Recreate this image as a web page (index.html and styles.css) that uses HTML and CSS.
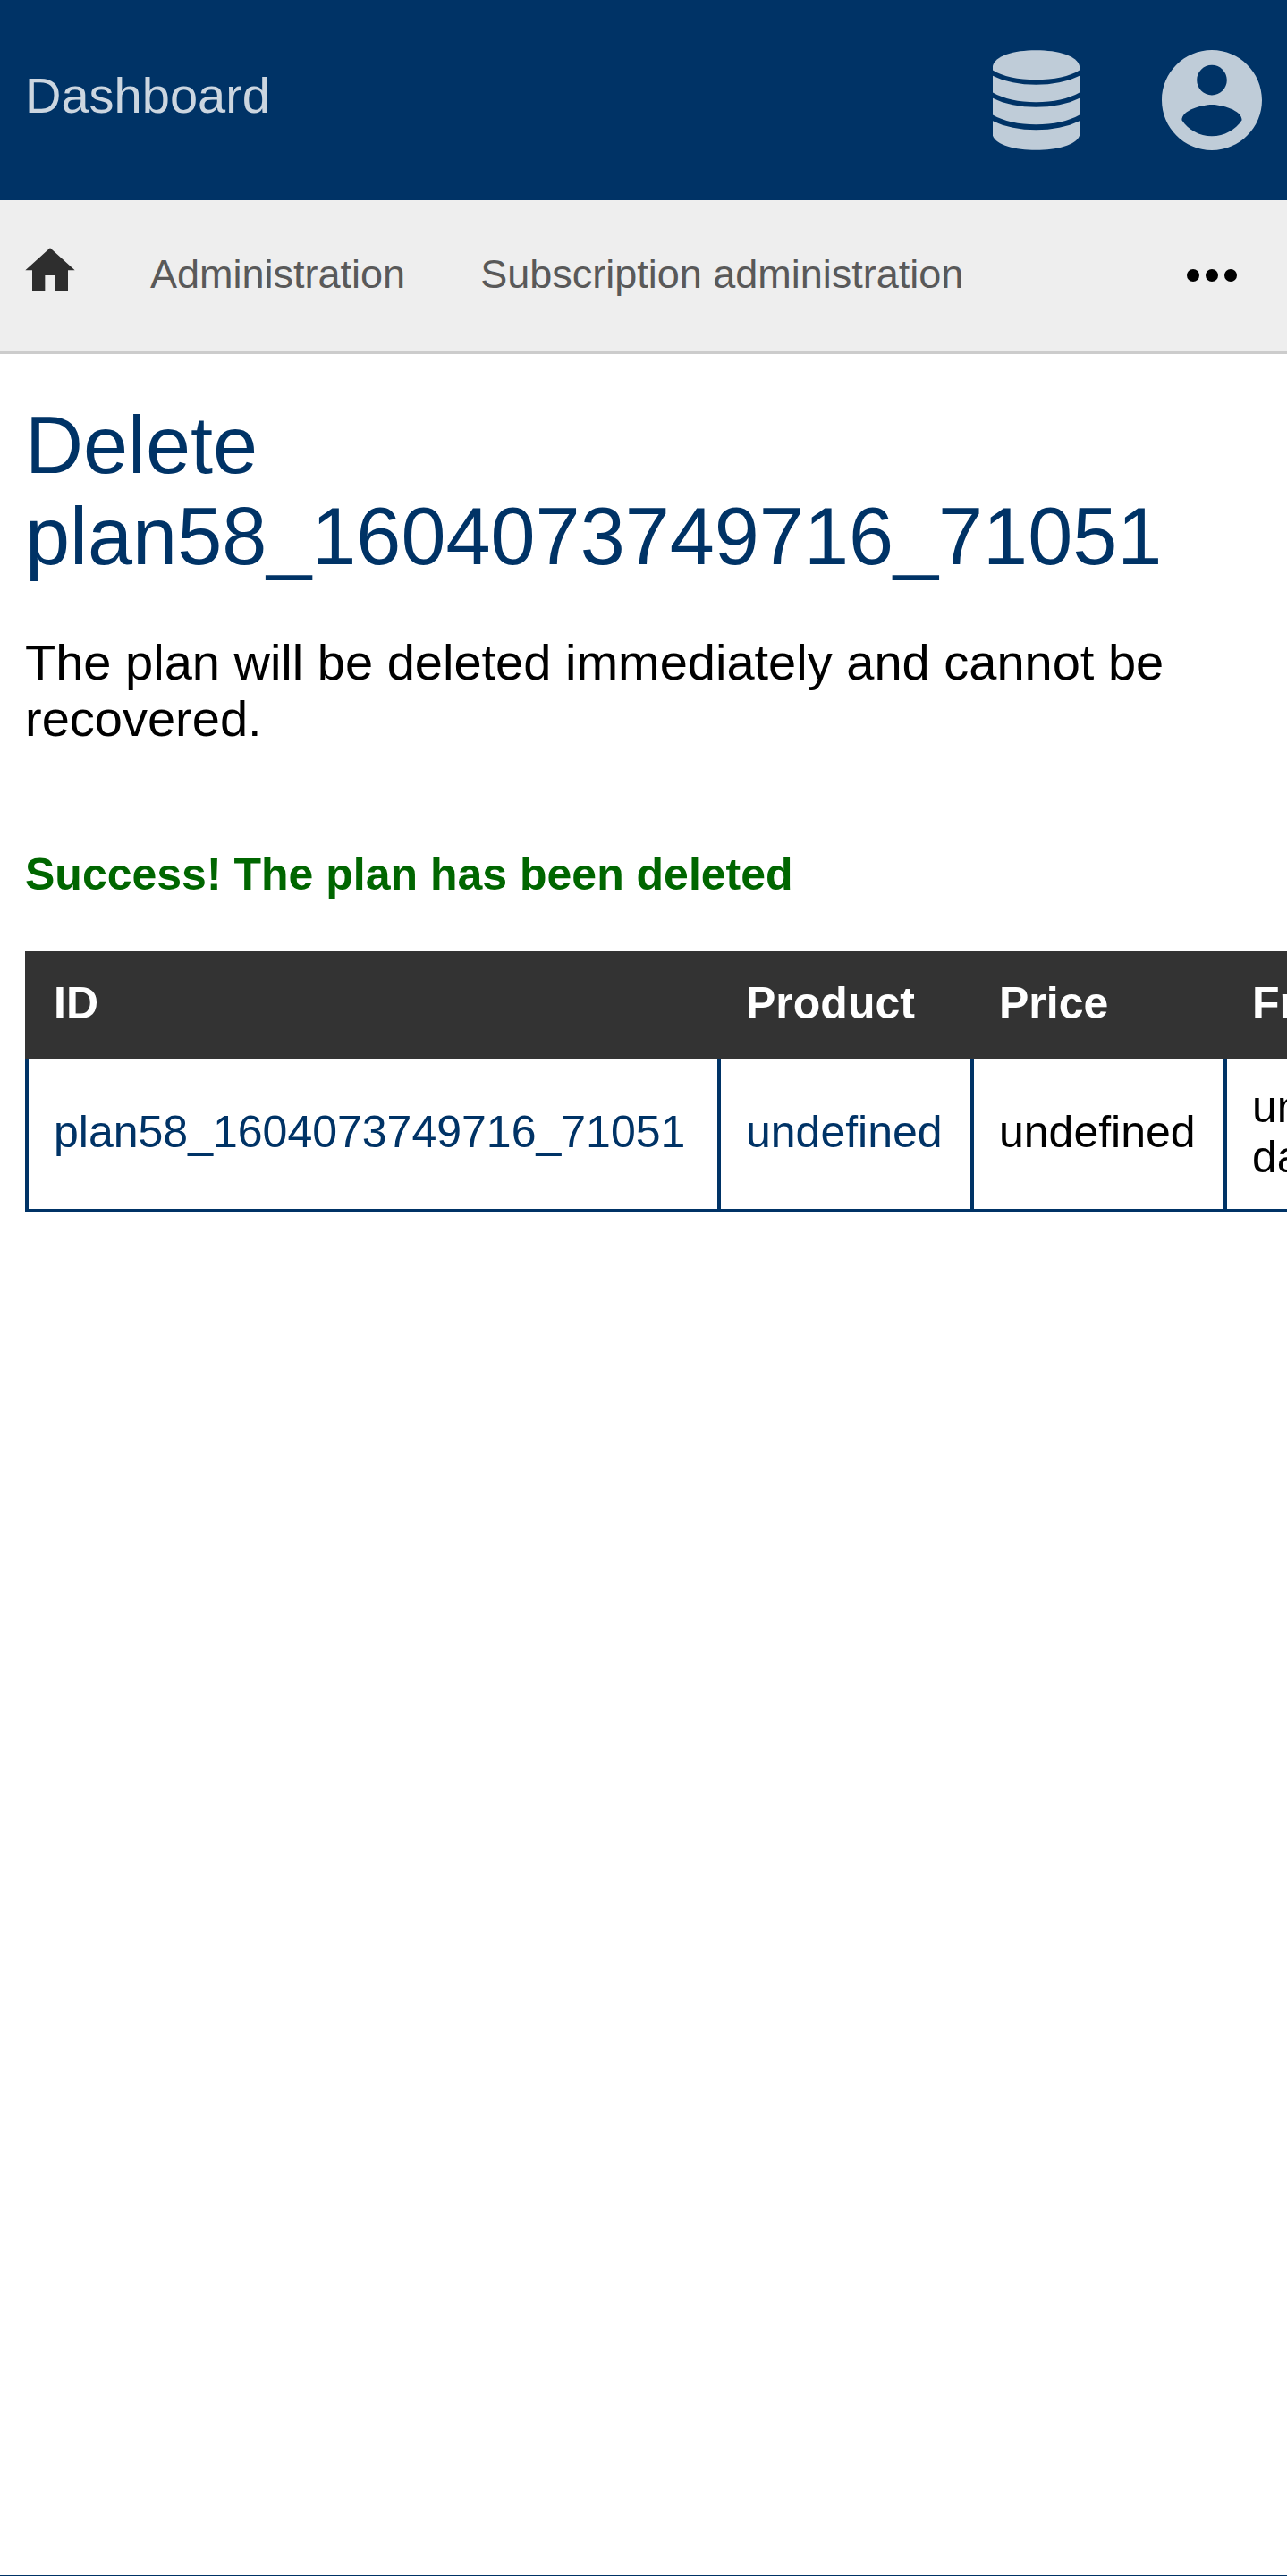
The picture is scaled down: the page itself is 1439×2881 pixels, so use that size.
FILE: index.html
```html
<!DOCTYPE html>
<html lang="en">
<head>
<meta charset="utf-8">
<meta name="viewport" content="width=device-width, initial-scale=1">
<title>Delete plan</title>
<link rel="stylesheet" href="styles.css">
</head>
<body>
<header class="header">
  <a class="header-title" href="#">Dashboard</a>
  <div class="header-menus">
    <button class="menu-button" type="button" aria-label="Administrator menu">
      <svg class="icon-database" viewBox="90 108 291 335" aria-hidden="true">
        <path d="M90 161C98 126 160 108 235 108S373 126 381 161V175C350 196 293 207 235 207S121 196 90 175Z"/>
        <path d="M90 194C130 214 182 224 235 224S341 214 381 194V250C345 271 292 282 235 282S126 271 90 250Z"/>
        <path d="M90 269C130 289 182 299 235 299S341 289 381 269V325C345 346 292 357 235 357S126 346 90 325Z"/>
        <path d="M90 345C130 365 182 375 235 375S341 365 381 345V395C369 427 304 443 235 443S102 427 90 395Z"/>
      </svg>
    </button>
    <button class="menu-button" type="button" aria-label="Account menu">
      <svg class="icon-account" viewBox="2 2 20 20" aria-hidden="true">
        <path d="M12 2C6.48 2 2 6.48 2 12s4.48 10 10 10 10-4.48 10-10S17.52 2 12 2zm0 3c1.66 0 3 1.34 3 3s-1.34 3-3 3-3-1.34-3-3 1.34-3 3-3zm0 14.2c-2.5 0-4.71-1.28-6-3.22.03-1.99 4-3.08 6-3.08 1.99 0 5.97 1.09 6 3.08-1.29 1.94-3.5 3.22-6 3.22z"/>
      </svg>
    </button>
  </div>
</header>
<nav class="navbar">
  <a class="nav-home" href="#" aria-label="Home">
    <svg class="icon-home" viewBox="84 828 168 192" aria-hidden="true">
      <path d="M168 832L251 907H228V975H185V924H151V975H108V907H85Z"/>
    </svg>
  </a>
  <a class="nav-link" href="#">Administration</a>
  <a class="nav-link" href="#">Subscription administration</a>
  <button class="nav-more" type="button" aria-label="More">
    <svg class="icon-more" viewBox="0 0 56 56" aria-hidden="true">
      <circle cx="7" cy="28" r="7"/><circle cx="28" cy="28" r="7"/><circle cx="49" cy="28" r="7"/>
    </svg>
  </button>
</nav>
<main class="content">
  <h1 class="title">Delete plan58_1604073749716_71051</h1>
  <p class="description">The plan will be deleted immediately and cannot be recovered.</p>
  <p class="success">Success! The plan has been deleted</p>
  <table class="data">
    <thead>
      <tr><th class="col-id" scope="col">ID</th><th class="col-value" scope="col">Product</th><th class="col-value" scope="col">Price</th><th scope="col">Frequency</th></tr>
    </thead>
    <tbody>
      <tr>
        <td><a href="#">plan58_1604073749716_71051</a></td>
        <td><a href="#">undefined</a></td>
        <td>undefined</td>
        <td>undefined day</td>
      </tr>
    </tbody>
  </table>
</main>
</body>
</html>
```
FILE: styles.css
```css
* {
  box-sizing: border-box;
}

body {
  display: flex;
  flex-direction: column;
  min-height: 100vh;
  margin: 0;
  border-bottom: 1px solid #003366;
  background: #fff;
  color: #000;
  font-family: "Liberation Sans", Arial, sans-serif;
  font-size: 56px;
}

a {
  color: #003366;
  text-decoration: none;
}

button {
  display: flex;
  padding: 0;
  border: 0;
  background: none;
}

svg {
  display: block;
}

.header {
  display: flex;
  align-items: center;
  justify-content: space-between;
  padding: 56px 28px;
  background: #003366;
}

.header-title {
  padding-bottom: 12px;
  color: #ccd6e0;
}

.header-menus {
  display: flex;
  gap: 92px;
}

.menu-button {
  fill: #bfccd8;
}

.icon-database {
  width: 97px;
  height: 112px;
}

.icon-account {
  width: 112px;
  height: 112px;
}

.navbar {
  display: flex;
  align-items: center;
  gap: 84px;
  padding: 52px 56px 52px 28px;
  border-bottom: 4px solid #ccc;
  background: #eee;
  font-size: 45px;
}

.icon-home {
  width: 56px;
  height: 64px;
  fill: #2e2e2e;
}

.nav-link {
  padding-bottom: 2px;
  color: #595959;
}

.nav-more {
  margin-left: auto;
}

.icon-more {
  width: 56px;
  height: 56px;
}

.content {
  flex: 1;
  padding: 51px 28px;
  overflow-x: hidden;
}

.title {
  margin: 0 0 58px;
  color: #003366;
  font-size: 90px;
  font-weight: 400;
  line-height: 102px;
}

.description {
  margin: 0 0 115px;
  line-height: 63px;
}

.success {
  margin: 0 0 58px;
  color: #006600;
  font-size: 50px;
  font-weight: 700;
  line-height: 56px;
}

.data {
  border-collapse: collapse;
  font-size: 50px;
  line-height: 56px;
}

.data th,
.data td {
  box-sizing: content-box;
  padding: 26px 28px 30px;
  border: 4px solid #003366;
  text-align: left;
}

.data th {
  border-color: #333;
  background: #333;
  color: #fff;
}

.data .col-id {
  min-width: 714px;
}

.data .col-value {
  min-width: 223px;
}
```
